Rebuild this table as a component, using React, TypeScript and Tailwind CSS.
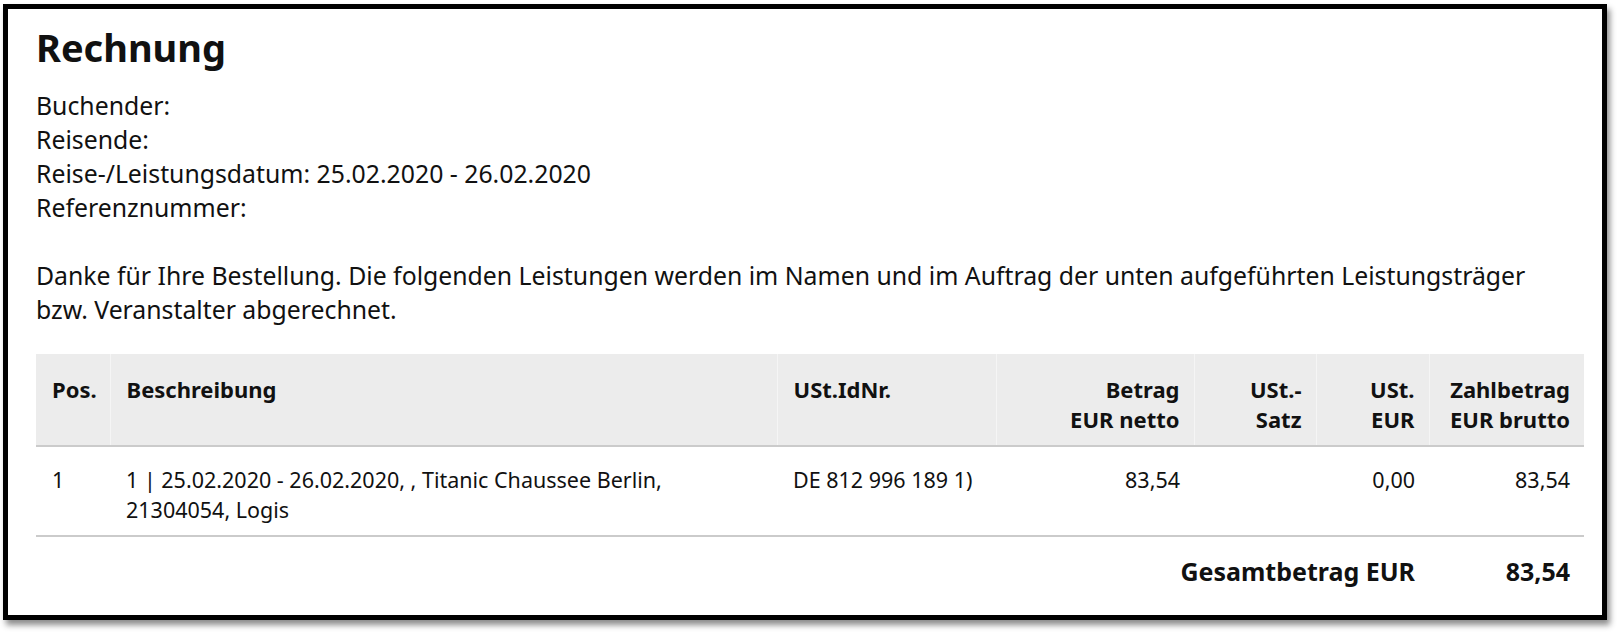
import React from "react";

const font = { fontFamily: '"Noto Sans", "Open Sans", sans-serif' };

const headCell = "align-top pt-5 pb-[10px] border-r border-[#f5f5f5] last:border-r-0 font-bold";
const bodyCell = "align-top pt-[18px]";

const App: React.FC = () => {
  return (
    <div className="w-[1618px] h-[633px] bg-white pt-[4px] pl-[3px]" style={font}>
      <div className="w-[1604px] h-[616px] border-[5px] border-black bg-white shadow-[3px_5px_6px_rgba(0,0,0,0.45)] pl-[28px] pr-[18px] text-[#111]">
        <h1 className="text-[38px] font-bold leading-[43px] mt-[17px]">Rechnung</h1>
        <div className="text-[24.8px] leading-[34px] mt-[19px]">
          <div>Buchender:</div>
          <div>Reisende:</div>
          <div>Reise-/Leistungsdatum: 25.02.2020 - 26.02.2020</div>
          <div>Referenznummer:</div>
          <p className="mt-[34px] w-[1520px]">
            Danke für Ihre Bestellung. Die folgenden Leistungen werden im Namen und im Auftrag der unten aufgeführten Leistungsträger bzw. Veranstalter abgerechnet.
          </p>
        </div>

        <table className="mt-[28px] table-fixed border-collapse w-[1548px] text-[22px] leading-[30px]">
          <colgroup>
            <col className="w-[74px]" />
            <col className="w-[667px]" />
            <col className="w-[219px]" />
            <col className="w-[198px]" />
            <col className="w-[122px]" />
            <col className="w-[113px]" />
            <col className="w-[155px]" />
          </colgroup>
          <thead>
            <tr className="bg-[#ececec] border-b-2 border-[#cbcbcb] h-[92px]">
              <th className={`${headCell} text-left pl-4`}>Pos.</th>
              <th className={`${headCell} text-left pl-4`}>Beschreibung</th>
              <th className={`${headCell} text-left pl-4`}>USt.IdNr.</th>
              <th className={`${headCell} text-right pr-[14px]`}>
                Betrag
                <br />
                EUR netto
              </th>
              <th className={`${headCell} text-right pr-[14px]`}>
                USt.-
                <br />
                Satz
              </th>
              <th className={`${headCell} text-right pr-[14px]`}>
                USt.
                <br />
                EUR
              </th>
              <th className={`${headCell} text-right pr-[14px]`}>
                Zahlbetrag
                <br />
                EUR brutto
              </th>
            </tr>
          </thead>
          <tbody>
            <tr className="border-b-2 border-[#cbcbcb] h-[90px] text-[21.5px]">
              <td className={`${bodyCell} pl-4`}>1</td>
              <td className={`${bodyCell} pl-4 pr-4`}>
                1 | 25.02.2020 - 26.02.2020, , Titanic Chaussee Berlin, 21304054, Logis
              </td>
              <td className={`${bodyCell} pl-4`}>DE 812 996 189 1)</td>
              <td className={`${bodyCell} pr-[14px] text-right`}>83,54</td>
              <td className={`${bodyCell} pr-[14px] text-right`}></td>
              <td className={`${bodyCell} pr-[14px] text-right`}>0,00</td>
              <td className={`${bodyCell} pr-[14px] text-right`}>83,54</td>
            </tr>
            <tr className="text-[25px] leading-[32px] font-bold">
              <td colSpan={6} className="pt-[18px] pr-[14px] text-right">
                Gesamtbetrag EUR
              </td>
              <td className="pt-[18px] pr-[14px] text-right">83,54</td>
            </tr>
          </tbody>
        </table>
      </div>
    </div>
  );
};

export default App;
